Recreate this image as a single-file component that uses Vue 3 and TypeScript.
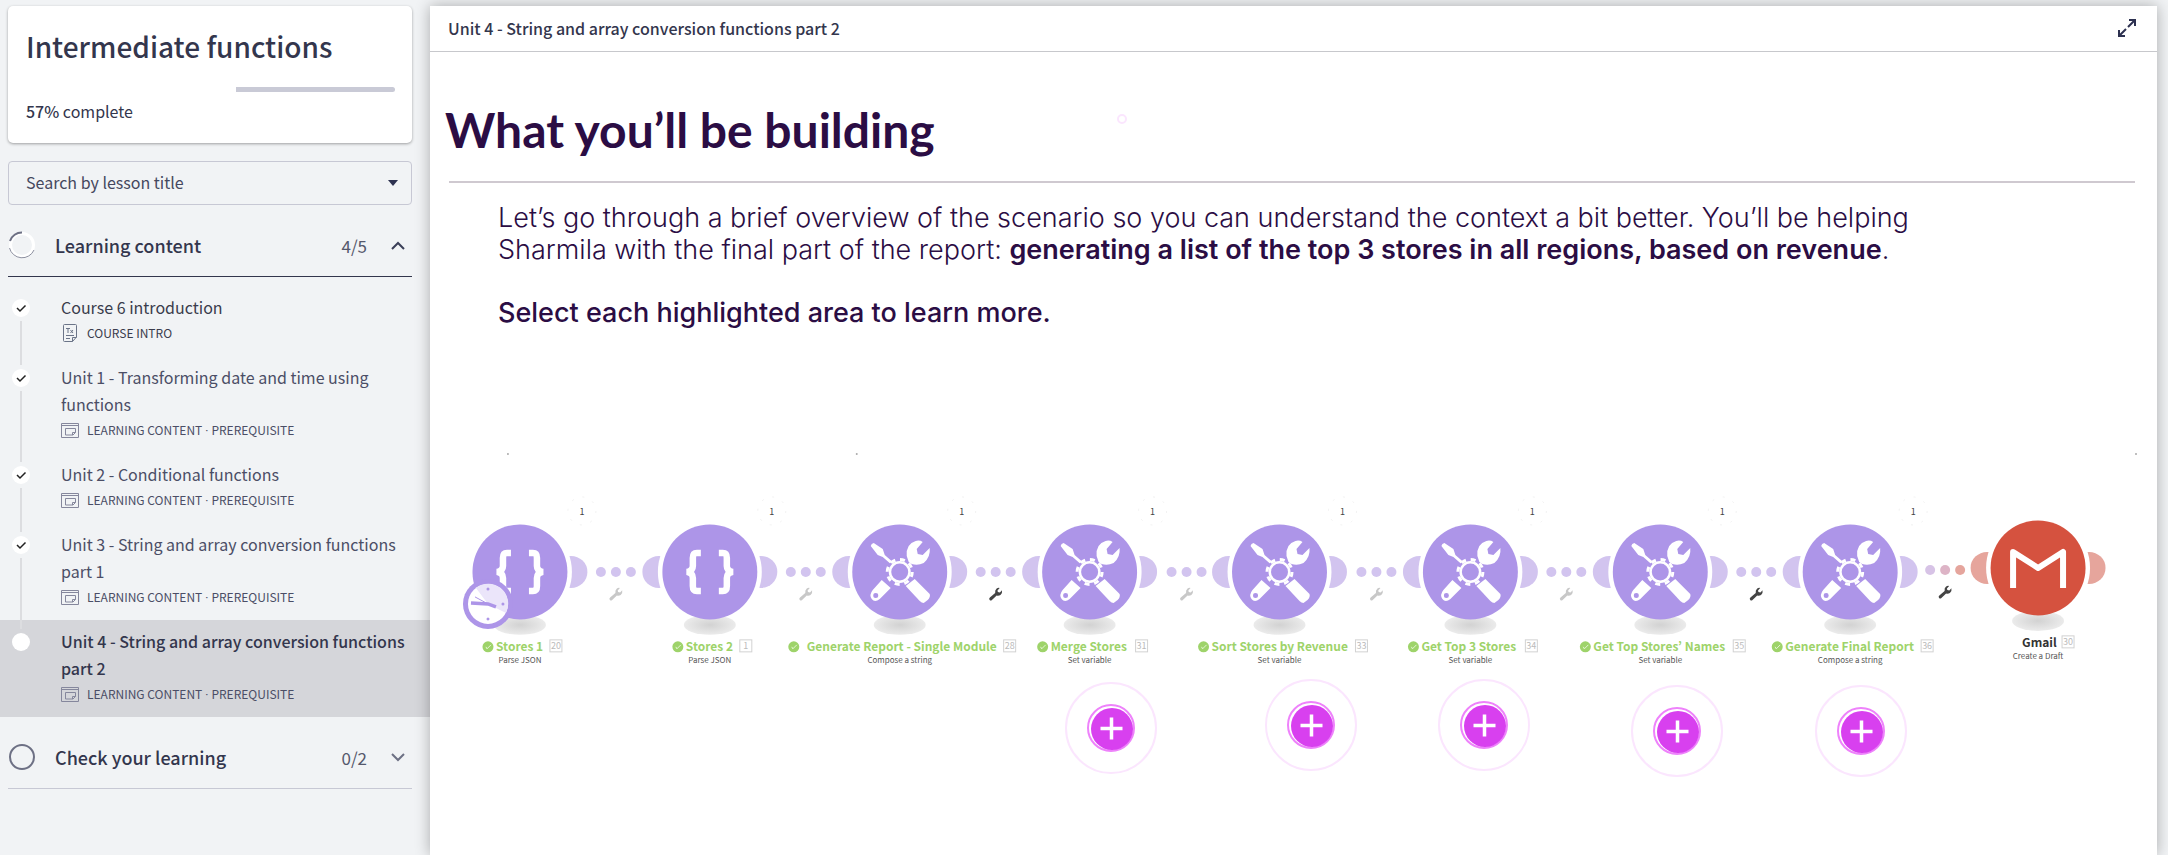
<script setup lang="ts">
interface Lesson {
  title: string
  kind: 'intro' | 'content'
  meta: string[]
  done: boolean
}

interface FlowNode {
  x: number
  y: number
  icon: 'braces' | 'tools' | 'gmail'
  label: string
  labelX: number
  checkX: number
  id: string
  idX: number
  sub: string
}

interface Link {
  x: number
  y: number
  strong: boolean
  colors: string[]
}

const required = ['LEARNING CONTENT', 'PREREQUISITE']

const lessons: Lesson[] = [
  { title: 'Course 6 introduction', kind: 'intro', meta: ['COURSE INTRO'], done: true },
  { title: 'Unit 1 - Transforming date and time using functions', kind: 'content', meta: required, done: true },
  { title: 'Unit 2 - Conditional functions', kind: 'content', meta: required, done: true },
  { title: 'Unit 3 - String and array conversion functions part 1', kind: 'content', meta: required, done: true },
  { title: 'Unit 4 - String and array conversion functions part 2', kind: 'content', meta: required, done: false },
]

const stageWidth = 1728
const stageHeight = 400

const nodes: FlowNode[] = [
  { x: 91, y: 152, icon: 'braces', label: 'Stores 1', labelX: 67, checkX: 59, id: '20', idX: 127, sub: 'Parse JSON' },
  { x: 281, y: 152, icon: 'braces', label: 'Stores 2', labelX: 257, checkX: 249, id: '1', idX: 317, sub: 'Parse JSON' },
  { x: 471, y: 152, icon: 'tools', label: 'Generate Report - Single Module', labelX: 378, checkX: 365, id: '28', idX: 581, sub: 'Compose a string' },
  { x: 661, y: 152, icon: 'tools', label: 'Merge Stores', labelX: 622, checkX: 614, id: '31', idX: 713, sub: 'Set variable' },
  { x: 851, y: 152, icon: 'tools', label: 'Sort Stores by Revenue', labelX: 783, checkX: 775, id: '33', idX: 933, sub: 'Set variable' },
  { x: 1042, y: 152, icon: 'tools', label: 'Get Top 3 Stores', labelX: 993, checkX: 985, id: '34', idX: 1103, sub: 'Set variable' },
  { x: 1232, y: 152, icon: 'tools', label: 'Get Top Stores’ Names', labelX: 1165, checkX: 1157, id: '35', idX: 1311, sub: 'Set variable' },
  { x: 1422, y: 152, icon: 'tools', label: 'Generate Final Report', labelX: 1357, checkX: 1349, id: '36', idX: 1499, sub: 'Compose a string' },
  { x: 1610, y: 148, icon: 'gmail', label: 'Gmail', labelX: 1594, checkX: 0, id: '30', idX: 1640, sub: 'Create a Draft' },
]

const purple = '#d2c4ef'
const links: Link[] = [0, 1, 2, 3, 4, 5, 6, 7].map((i) => ({
  x: i === 7 ? 1516 : 186 + Math.round(i * 190.2),
  y: i === 7 ? 150 : 152,
  strong: [2, 6, 7].includes(i),
  colors: i === 7 ? ['#d7c3e6', '#ddb4c6', '#e5a59d'] : [purple, purple, purple],
}))

const hotspots = [
  { x: 681, y: 308 },
  { x: 882, y: 305 },
  { x: 1055, y: 305 },
  { x: 1248, y: 311 },
  { x: 1432, y: 311 },
]

const specks = [
  { x: 79, y: 34 },
  { x: 428, y: 34 },
  { x: 1708, y: 34 },
]

const place = (p: { x: number; y: number }) => ({
  left: (p.x / stageWidth) * 100 + '%',
  top: (p.y / stageHeight) * 100 + '%',
})
</script>

<template>
  <div class="page">
    <aside class="sidebar">
      <section class="card">
        <h1>Intermediate functions</h1>
        <div class="track"><div class="rest"></div></div>
        <p class="complete"><strong>57%</strong> complete</p>
      </section>

      <div class="search">
        <select aria-label="Search by lesson title">
          <option>Search by lesson title</option>
        </select>
        <svg class="caret" width="10" height="6" viewBox="0 0 10 6"><path d="M0 0H10L5 6Z" fill="#2d3150" /></svg>
      </div>

      <button class="group open" type="button" aria-expanded="true">
        <svg width="28" height="28" viewBox="0 0 28 28" fill="none">
          <circle cx="14" cy="14" r="11.5" stroke="#fff" stroke-width="3" />
          <path d="M1.5 17A13 13 0 0 0 26 19" stroke="#8d90a0" />
          <path d="M2 10A12.500 12.500 0 0 1 14 1.500" stroke="#6d7084" stroke-width="2" />
        </svg>
        <span class="group-name">Learning content</span>
        <span class="count">4/5</span>
        <svg class="chev" width="14" height="9" viewBox="0 0 14 9" fill="none"><path d="M1 8L7 2L13 8" stroke="#3b3f58" stroke-width="2" /></svg>
      </button>

      <ul class="lessons">
        <li v-for="(l, i) in lessons" :key="l.title" :class="{ active: !l.done }">
          <div class="rail">
            <span class="dot">
              <svg v-if="l.done" width="18" height="18" viewBox="0 0 18 18" fill="none"><path d="M5 9L8 12L13.500 6.500" stroke="#222" stroke-width="1.500" /></svg>
            </span>
            <span v-if="i < lessons.length - 1" class="line"></span>
          </div>
          <a href="#" :class="{ first: i === 0 }">
            <span class="lesson-title">{{ l.title }}</span>
            <span class="meta">
              <svg v-if="l.kind === 'intro'" width="18" height="18" viewBox="0 0 18 18" fill="none" stroke="#6b7488">
                <path d="M3.500 .5H14.500Q15.500 .5 15.500 1.500V13L11.500 17.500H3.500Q2.500 17.500 2.500 16.500V1.500Q2.500 .5 3.500 .5ZM11.500 17.500V13.500H15.500M5 11.500H13M5 14.500H9M5 4.500H9M7 4.500V9M9.500 6L12 9M12 6L9.500 9" />
              </svg>
              <svg v-else width="18" height="18" viewBox="0 0 18 18" fill="none" stroke="#85879c">
                <path d="M.5 2.500H17.500V16.500H.5ZM.5 4.500H17.500" /><path d="M4.500 7.500H14.500V11.500L12 14H4.500ZM11.500 14V11.500H14.500" />
              </svg>
              <span class="kinds">
                <template v-for="(m, k) in l.meta" :key="m"><span v-if="k" class="sep"> · </span>{{ m }}</template>
              </span>
            </span>
          </a>
        </li>
      </ul>

      <button class="group" type="button" aria-expanded="false">
        <svg width="28" height="28" viewBox="0 0 28 28" fill="none"><circle cx="14" cy="14" r="12" stroke="#6d7084" stroke-width="2" /></svg>
        <span class="group-name">Check your learning</span>
        <span class="count">0/2</span>
        <svg class="chev" width="14" height="9" viewBox="0 0 14 9" fill="none"><path d="M1 1L7 7L13 1" stroke="#6d7084" stroke-width="2" /></svg>
      </button>
    </aside>

    <main class="viewer">
      <header class="bar">
        <h2>Unit 4 - String and array conversion functions part 2</h2>
        <button class="full" type="button" aria-label="Full screen">
          <svg width="20" height="20" viewBox="0 0 20 20" fill="none" stroke="#2d3150" stroke-width="2">
            <path d="M12 2H18V8M18 2L11 9M2 12V18H8M2 18L9 11" />
          </svg>
        </button>
      </header>

      <article class="slide">
        <div class="heading">
          <h3>What you’ll be building</h3>
          <span class="ring"></span>
        </div>
        <hr />
        <div class="copy">
          <p>
            Let’s go through a brief overview of the scenario so you can understand the context a bit better. You’ll be helping<br />
            Sharmila with the final part of the report: <b>generating a list of the top 3 stores in all regions, based on revenue</b>.
          </p>
          <p class="ask">Select each highlighted area to learn more.</p>
        </div>

        <div class="stage">
          <svg class="flow" :viewBox="`1 0 ${stageWidth} ${stageHeight}`">
            <defs>
              <radialGradient id="shade">
                <stop offset="0" stop-color="#d2d2d2" />
                <stop offset="1" stop-color="#ebebeb" />
              </radialGradient>
              <path id="wrench" d="M-6 6.200Q-7.200 4.800 -5.800 3.500L-.5 -1Q-1 -4 1 -5.500Q2.500 -6.500 4 -6L1.800 -3.500L2.200 -1.800L4.200 -1.500L6.300 -3.600Q7 -.5 4.800 1Q3 2.200 1 1.600L-4 6.300Q-5 7.200 -6 6.200Z" />
              <g id="braces" fill="none" stroke="#fff" stroke-width="6.500">
                <path d="M-9 -19H-13Q-17 -19 -17 -14V-6Q-17 -1 -23 0Q-17 1 -17 6V14Q-17 19 -13 19H-9" />
                <path d="M9 -19H13Q17 -19 17 -14V-6Q17 -1 23 0Q17 1 17 6V14Q17 19 13 19H9" />
              </g>
              <g id="tools" fill="#fff">
                <path d="M-28 -28L-26 -29L-17 -23L-15 -17L-7 -10L-9 -8L-17 -15L-22 -17L-29 -26Z" />
                <path d="M7 -16Q6 -28 16 -31Q20 -32 23 -30L17 -23L18 -18L23 -17L30 -24Q31 -15 24 -9Q18 -6 12 -8L9 -10Z" />
                <path d="M-18 8L-9 16L-20 27Q-25 31 -28 27Q-31 23 -27 18ZM-24 21A2.500 2.500 0 1 0 -24 26A2.500 2.500 0 1 0 -24 21Z" fill-rule="evenodd" />
                <path d="M6 14L15 7L30 22Q31 25 28 28L24 31Q22 31 20 29Z" />
                <circle r="12" fill="#fff" stroke="#ad95e8" stroke-width="2" />
                <circle r="12.500" fill="none" stroke="#fff" stroke-width="3" stroke-dasharray="5 4.800" />
                <circle r="8.500" fill="#ad95e8" />
              </g>
            </defs>

            <g fill="#aaa"><circle v-for="s in specks" :key="s.x" :cx="s.x" :cy="s.y" r="1" /></g>

            <g v-for="(l, i) in links" :key="i">
              <circle v-for="(c, k) in l.colors" :key="k" :cx="l.x - 14 + k * 15" :cy="l.y" r="5" :fill="c" />
              <use href="#wrench" :x="l.x + 1" :y="l.y + 22" :fill="l.strong ? '#444' : '#c8c8c8'" />
              <text class="runs" :x="i === 7 ? 1485 : l.x - 33" y="95">1</text>
              <circle :cx="i === 7 ? 1485 : l.x - 33" cy="91" r="14" fill="none" stroke="#f0f0f0" stroke-dasharray="2 9" />
            </g>

            <g v-for="(n, i) in nodes" :key="n.label">
              <ellipse v-if="i > 0" :cx="n.x - 51" :cy="n.y" rx="16.500" ry="16" :fill="n.icon === 'gmail' ? '#e6a59c' : purple" />
              <ellipse :cx="n.x + 51" :cy="n.y" rx="16.500" ry="16" :fill="n.icon === 'gmail' ? '#e6a59c' : purple" />
              <circle :cx="n.x" :cy="n.y" r="52" fill="#fff" />
              <ellipse :cx="n.x" :cy="n.y + 53" rx="26" ry="10" fill="url(#shade)" />
              <circle :cx="n.x" :cy="n.y" r="47.500" :fill="n.icon === 'gmail' ? '#d5523f' : '#ad95e8'" />
              <path v-if="n.icon === 'gmail'" :transform="`translate(${n.x} ${n.y})`" d="M-25 20V-16L0 0L25 -16V20" fill="none" stroke="#fff" stroke-width="6" stroke-linejoin="round" />
              <use v-else :href="'#' + n.icon" :x="n.x" :y="n.y" />

              <g v-if="n.checkX">
                <circle :cx="n.checkX" :cy="n.y + 75" r="5.500" fill="#9ed36a" />
                <path :transform="`translate(${n.checkX} ${n.y + 75})`" d="M-2 0L-1 2L3 -2" fill="none" stroke="#e4f4d4" />
              </g>
              <text :class="['name', { dark: n.icon === 'gmail' }]" :x="n.labelX" :y="n.y + 79">{{ n.label }}</text>
              <rect :x="n.idX - 6" :y="n.y + 68" width="12" height="12" fill="#fff" stroke="#d2d2d2" />
              <text class="tag" :x="n.idX" :y="n.y + 77">{{ n.id }}</text>
              <text class="sub" :x="n.x" :y="n.y + 91">{{ n.sub }}</text>
            </g>

            <g transform="translate(59 184)" fill="none" stroke="#ad95e8">
              <circle r="25" fill="#ad95e8" stroke="none" />
              <circle r="20" fill="#fff" stroke="none" />
              <path d="M-12 -16A20 20 0 0 1 18 9L0 0Z" fill="#ebe5fa" stroke="none" />
              <path d="M-17 -1L0 0L8 3" stroke-width="3.500" />
              <path d="M-13 -7L0 0" />
              <g fill="#ad95e8" stroke="none"><circle cy="-15" r="1.500" /><circle cx="15" r="1.500" /><circle cy="15" r="1.500" /></g>
            </g>
          </svg>

          <button v-for="h in hotspots" :key="h.x" class="hot" type="button" aria-label="Learn more" :style="place(h)">
            <svg viewBox="0 0 92 92" fill="none">
              <circle cx="46" cy="46" r="45" stroke="#fbe6fe" stroke-width="2" />
              <circle cx="46" cy="46" r="23" stroke="#ee82fb" stroke-width="2" />
              <circle cx="47" cy="47" r="21" fill="#d840ef" />
              <path d="M35.500 46.500H57.500M46.500 35.500V57.500" stroke="#fff" stroke-width="3.500" />
            </svg>
          </button>
        </div>
      </article>
    </main>
  </div>
</template>

<style>
html,
body {
  margin: 0;
  background: #f1f3f5;
}
</style>

<style scoped>
* {
  box-sizing: border-box;
}
.page {
  display: flex;
  min-height: 100vh;
  overflow: hidden;
  color: #33364d;
  font-family: "Noto Sans CJK SC", "Noto Sans", sans-serif;
  background: #f1f3f5;
}
h1,
h2,
h3,
p,
ul {
  margin: 0;
  padding: 0;
}
button {
  font: inherit;
  color: inherit;
  background: none;
  border: 0;
  padding: 0;
  cursor: pointer;
}
.sidebar {
  width: 430px;
  flex: none;
  padding-top: 6px;
}
.card {
  margin: 0 18px 0 8px;
  padding: 19px 17px 0 18px;
  height: 137px;
  background: #fff;
  border-radius: 5px;
  box-shadow: 0 1px 3px rgba(0, 0, 0, 0.35);
}
h1 {
  font-size: 28px;
  line-height: 42px;
  font-weight: 500;
}
.track {
  display: flex;
  justify-content: flex-end;
  margin-top: 20px;
  height: 5px;
}
.rest {
  width: 43%;
  background: #c9cad6;
  border-radius: 0 3px 3px 0;
}
.complete {
  margin-top: 7px;
  font-size: 16px;
  line-height: 24px;
}
.complete strong {
  font-weight: 500;
}
.search {
  position: relative;
  margin: 18px 18px 0 8px;
}
.search select {
  display: block;
  width: 100%;
  height: 44px;
  padding: 0 17px 2px;
  appearance: none;
  background: transparent;
  border: 1px solid #c7c8d4;
  border-radius: 4px;
  font: inherit;
  font-size: 16px;
  color: #45485e;
}
.caret {
  position: absolute;
  right: 14px;
  top: 19px;
}
.group {
  display: flex;
  align-items: center;
  width: 404px;
  height: 63px;
  margin: 9px 18px 0 8px;
  border-bottom: 1px solid #c7c8d4;
  text-align: left;
}
.group.open {
  border-color: #33364d;
}
.group-name {
  flex: 1;
  margin-left: 19px;
  font-size: 18px;
  line-height: 27px;
  font-weight: 500;
}
.count {
  font-size: 17px;
  color: #55586c;
}
.chev {
  margin: 0 7px 0 24px;
}
.lessons {
  list-style: none;
  margin: 9px 0;
}
.lessons li {
  display: flex;
}
.active {
  background: #d5d6da;
}
.rail {
  display: flex;
  flex-direction: column;
  align-items: center;
  width: 42px;
  padding-top: 13px;
}
.dot {
  width: 18px;
  height: 18px;
  border-radius: 50%;
  background: #fff;
}
.dot svg {
  display: block;
}
.line {
  flex: 1;
  width: 2px;
  margin-top: 4px;
  margin-bottom: -9px;
  background: #dcdde0;
}
.lessons a {
  flex: 1;
  padding: 8px 16px 12px 19px;
  text-decoration: none;
  color: #4b4e66;
}
.lessons a.first {
  color: #3a3c4c;
}
.lesson-title {
  display: block;
  font-size: 16px;
  line-height: 27px;
}
.active .lesson-title {
  font-weight: 500;
  color: #33364d;
}
.meta {
  display: flex;
  align-items: center;
  gap: 8px;
  height: 23px;
  font-size: 12px;
}
.sep {
  white-space: pre;
  font-family: Roboto, sans-serif;
}
.viewer {
  flex: 1;
  min-width: 0;
  margin: 6px 11px 0 0;
  background: #fff;
  box-shadow: 0 0 14px rgba(0, 0, 0, 0.3);
}
.bar {
  display: flex;
  align-items: center;
  justify-content: space-between;
  height: 46px;
  padding: 0 20px 2px 18px;
  border-bottom: 1px solid #c7c8cc;
}
h2 {
  font-size: 16px;
  font-weight: 500;
}
.full {
  height: 20px;
}
.full svg {
  display: block;
}
.slide {
  color: #2b0d44;
}
.heading {
  position: relative;
  padding: 44px 0 0 15px;
}
h3 {
  font-family: Lato, sans-serif;
  font-size: 48px;
  line-height: 68px;
  font-weight: 700;
}
.ring {
  position: absolute;
  left: 40%;
  margin-left: -4px;
  top: 62px;
  width: 10px;
  height: 10px;
  border: 2px solid #fbe6fe;
  border-radius: 50%;
}
hr {
  margin: 17px 22px 0 19px;
  border: 0;
  border-top: 2px solid #cfc9d0;
}
.copy {
  padding: 19px 0 0 68px;
  font-family: Inter, sans-serif;
  font-size: 27px;
  line-height: 32px;
}
.copy p {
  font-weight: 300;
}
.copy b {
  font-weight: 600;
}
.copy p.ask {
  margin-top: 31px;
  font-weight: 500;
}
.stage {
  position: relative;
  margin-top: 91px;
}
.flow {
  display: block;
  width: 100%;
}
.name {
  font-family: "Noto Sans CJK JP", "Noto Sans", sans-serif;
  font-size: 12px;
  font-weight: 700;
  fill: #9ed36a;
}
.name.dark {
  fill: #333;
}
.tag {
  font-size: 9px;
  text-anchor: middle;
  fill: #bbb;
}
.sub {
  font-size: 8px;
  text-anchor: middle;
  fill: #555;
}
.runs {
  font-size: 9px;
  text-anchor: middle;
  fill: #444;
}
.hot {
  position: absolute;
  width: 92px;
  height: 92px;
  margin: -46px 0 0 -46px;
}
.hot svg {
  display: block;
}
</style>
